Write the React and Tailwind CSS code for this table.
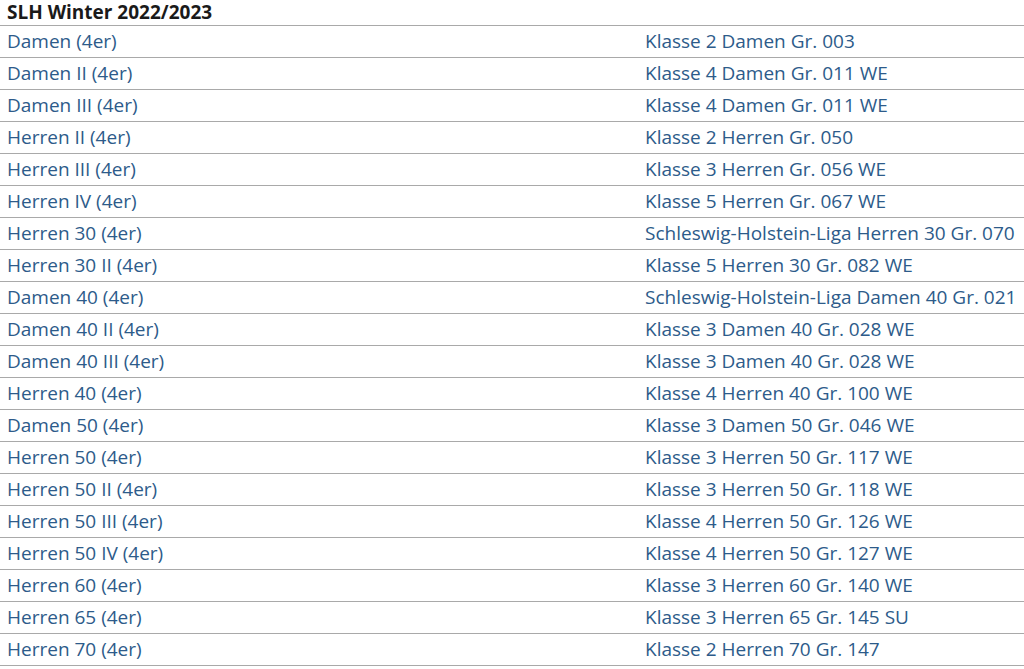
const rows = [
  ['Damen (4er)', 'Klasse 2 Damen Gr. 003'],
  ['Damen II (4er)', 'Klasse 4 Damen Gr. 011 WE'],
  ['Damen III (4er)', 'Klasse 4 Damen Gr. 011 WE'],
  ['Herren II (4er)', 'Klasse 2 Herren Gr. 050'],
  ['Herren III (4er)', 'Klasse 3 Herren Gr. 056 WE'],
  ['Herren IV (4er)', 'Klasse 5 Herren Gr. 067 WE'],
  ['Herren 30 (4er)', 'Schleswig-Holstein-Liga Herren 30 Gr. 070'],
  ['Herren 30 II (4er)', 'Klasse 5 Herren 30 Gr. 082 WE'],
  ['Damen 40 (4er)', 'Schleswig-Holstein-Liga Damen 40 Gr. 021'],
  ['Damen 40 II (4er)', 'Klasse 3 Damen 40 Gr. 028 WE'],
  ['Damen 40 III (4er)', 'Klasse 3 Damen 40 Gr. 028 WE'],
  ['Herren 40 (4er)', 'Klasse 4 Herren 40 Gr. 100 WE'],
  ['Damen 50 (4er)', 'Klasse 3 Damen 50 Gr. 046 WE'],
  ['Herren 50 (4er)', 'Klasse 3 Herren 50 Gr. 117 WE'],
  ['Herren 50 II (4er)', 'Klasse 3 Herren 50 Gr. 118 WE'],
  ['Herren 50 III (4er)', 'Klasse 4 Herren 50 Gr. 126 WE'],
  ['Herren 50 IV (4er)', 'Klasse 4 Herren 50 Gr. 127 WE'],
  ['Herren 60 (4er)', 'Klasse 3 Herren 60 Gr. 140 WE'],
  ['Herren 65 (4er)', 'Klasse 3 Herren 65 Gr. 145 SU'],
  ['Herren 70 (4er)', 'Klasse 2 Herren 70 Gr. 147'],
];

export default function App() {
  return (
    <div className="min-h-screen bg-white font-['Open_Sans',sans-serif]">
      <h2 className="px-[7px] h-[26px] border-b border-[#a9a9a9] text-[19px] leading-[24px] font-bold text-[#1a1a1a]">
        SLH Winter 2022/2023
      </h2>
      {rows.map(([team, league], i) => (
        <div key={i} className="flex h-[32px] items-center pb-[2px] border-b border-[#a9a9a9] text-[19px] leading-[26px] text-[#2d5b8a]">
          <a href="#" className="w-[638px] px-[7px]">{team}</a>
          <a href="#" className="flex-1 px-[7px]">{league}</a>
        </div>
      ))}
    </div>
  );
}
